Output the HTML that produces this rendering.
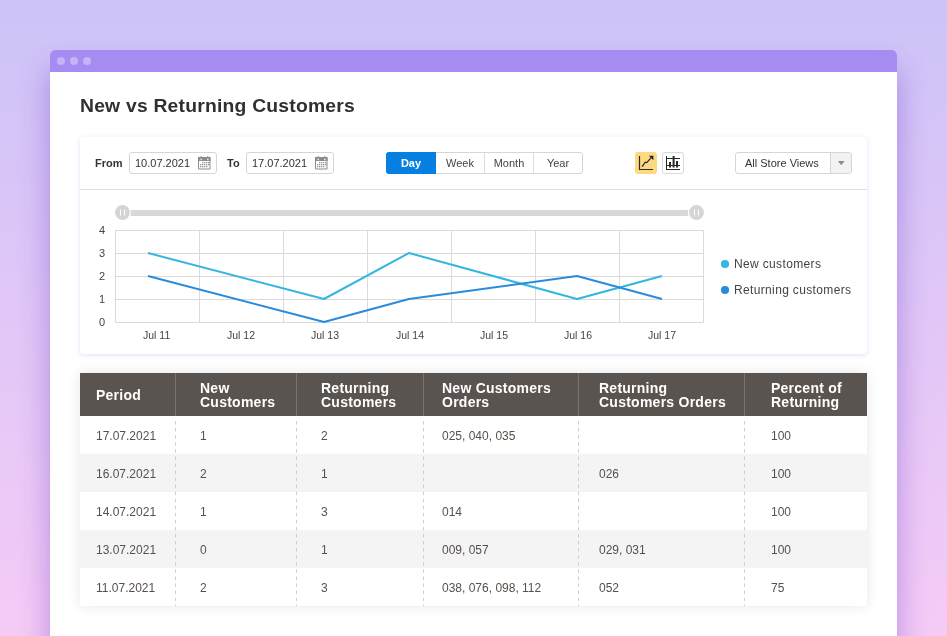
<!DOCTYPE html>
<html><head><meta charset="utf-8">
<style>
*{margin:0;padding:0;box-sizing:border-box}
html,body{width:947px;height:636px;overflow:hidden}
body{position:relative;-webkit-font-smoothing:antialiased;font-family:"Liberation Sans",sans-serif;background:linear-gradient(180deg,#cdc3f8 0%,#f5cbf6 100%);color:#333}
#win{position:absolute;left:50px;top:50px;width:847px;height:620px;background:#fff;border-radius:5px 5px 0 0;box-shadow:0 20px 30px rgba(100,50,200,0.42)}
#bar{position:absolute;left:0;top:0;width:847px;height:22px;background:#a68bf0;border-radius:5px 5px 0 0}
.dot{position:absolute;top:7px;width:8px;height:8px;border-radius:50%;background:#c4b3f7}
#title{position:absolute;left:80px;top:96px;font-size:18px;line-height:20px;font-weight:bold;color:#303030;white-space:nowrap;letter-spacing:0.2px;transform:scaleX(1.073);transform-origin:0 0}
#card{position:absolute;left:80px;top:137px;width:787px;height:217px;background:#fff;border-radius:4px;box-shadow:0 1px 5px rgba(185,185,250,0.45)}
#tb{position:absolute;left:0;top:0;width:787px;height:53px;border-bottom:1px solid #dedede}
.t{position:absolute;white-space:nowrap;line-height:14px}
.lbl{top:19px;font-size:11px;font-weight:bold;color:#333}
.inp{position:absolute;top:15px;height:22px;border:1px solid #d6d6d6;border-radius:3px;background:#fff;font-size:11px;color:#333}
.inp span{position:absolute;left:5px;top:3px;line-height:14px}
.inp svg{position:absolute;top:3px}
.bg{position:absolute;left:306px;top:15px;width:197px;height:22px;border:1px solid #d6d6d6;border-radius:3px;background:#fff}
.btn{position:absolute;top:0;height:20px;font-size:11px;color:#444;text-align:center;line-height:20px}
.sep{position:absolute;top:0;width:1px;height:20px;background:#dcdcdc}
#tbl{position:absolute;left:80px;top:373px;width:787px;height:233px;background:#fff;box-shadow:0 0 12px rgba(0,0,0,0.1)}
#hd{position:absolute;left:0;top:0;width:787px;height:43px;background:#5a5450}
.hsep{position:absolute;top:0;width:1px;height:43px;background:#7a7470}
.h{position:absolute;color:#fff;font-weight:bold;font-size:14px;line-height:14px;margin-top:0px;letter-spacing:0.25px;white-space:nowrap}
.row{position:absolute;left:0;width:787px;height:38px}
.alt{background:#f4f4f4}
.c{position:absolute;font-size:12px;color:#57504b;line-height:14px;white-space:nowrap;margin-top:1px}
.dsep{position:absolute;top:48px;width:1px;height:185px;background-image:linear-gradient(180deg,#cfcfcf 0,#cfcfcf 3.3px,transparent 3.3px,transparent 7.07px);background-size:1px 7.07px}
</style></head><body><div id="root" style="position:absolute;left:0;top:0;width:947px;height:636px;will-change:transform">
<div id="win">
  <div id="bar"><div class="dot" style="left:7px"></div><div class="dot" style="left:20px"></div><div class="dot" style="left:33px"></div></div>
</div>
<div id="title">New vs Returning Customers</div>
<div id="card">
  <div id="tb">
    <div class="t lbl" style="left:15px">From</div>
    <div class="inp" style="left:49px;width:88px"><span>10.07.2021</span>
      <svg style="left:68px" width="14" height="15" viewBox="0 0 14 15"><path d="M0.5 1.5h11.5v11.5h-11.5z" fill="none" stroke="#8f8a87" stroke-width="1"/><rect x="0" y="1" width="12.5" height="4" fill="#8f8a87"/><g fill="#fff"><rect x="2.6" y="2.4" width="1.2" height="1.8"/><rect x="9.2" y="2.4" width="1.2" height="1.8"/></g><g fill="#8f8a87"><rect x="2.7" y="0" width="1" height="2.6"/><rect x="9.3" y="0" width="1" height="2.6"/></g><g fill="#9a9592"><rect x="4" y="6" width="1.3" height="1.3"/><rect x="6" y="6" width="1.3" height="1.3"/><rect x="8" y="6" width="1.3" height="1.3"/><rect x="10" y="6" width="1.3" height="1.3"/><rect x="2" y="8" width="1.3" height="1.3"/><rect x="4" y="8" width="1.3" height="1.3"/><rect x="6" y="8" width="1.3" height="1.3"/><rect x="8" y="8" width="1.3" height="1.3"/><rect x="10" y="8" width="1.3" height="1.3"/><rect x="2" y="10" width="1.3" height="1.3"/><rect x="4" y="10" width="1.3" height="1.3"/><rect x="6" y="10" width="1.3" height="1.3"/><rect x="8" y="10" width="1.3" height="1.3"/></g></svg>
    </div>
    <div class="t lbl" style="left:147px">To</div>
    <div class="inp" style="left:166px;width:88px"><span>17.07.2021</span>
      <svg style="left:68px" width="14" height="15" viewBox="0 0 14 15"><path d="M0.5 1.5h11.5v11.5h-11.5z" fill="none" stroke="#8f8a87" stroke-width="1"/><rect x="0" y="1" width="12.5" height="4" fill="#8f8a87"/><g fill="#fff"><rect x="2.6" y="2.4" width="1.2" height="1.8"/><rect x="9.2" y="2.4" width="1.2" height="1.8"/></g><g fill="#8f8a87"><rect x="2.7" y="0" width="1" height="2.6"/><rect x="9.3" y="0" width="1" height="2.6"/></g><g fill="#9a9592"><rect x="4" y="6" width="1.3" height="1.3"/><rect x="6" y="6" width="1.3" height="1.3"/><rect x="8" y="6" width="1.3" height="1.3"/><rect x="10" y="6" width="1.3" height="1.3"/><rect x="2" y="8" width="1.3" height="1.3"/><rect x="4" y="8" width="1.3" height="1.3"/><rect x="6" y="8" width="1.3" height="1.3"/><rect x="8" y="8" width="1.3" height="1.3"/><rect x="10" y="8" width="1.3" height="1.3"/><rect x="2" y="10" width="1.3" height="1.3"/><rect x="4" y="10" width="1.3" height="1.3"/><rect x="6" y="10" width="1.3" height="1.3"/><rect x="8" y="10" width="1.3" height="1.3"/></g></svg>
    </div>
    <div class="bg">
      <div class="btn" style="left:-1px;top:-1px;width:50px;height:22px;line-height:22px;background:#0580e2;color:#fff;font-weight:bold;border-radius:3px 0 0 3px">Day</div>
      <div class="btn" style="left:49px;width:48px">Week</div>
      <div class="sep" style="left:97px"></div>
      <div class="btn" style="left:98px;width:48px">Month</div>
      <div class="sep" style="left:146px"></div>
      <div class="btn" style="left:147px;width:48px">Year</div>
    </div>
    <!-- line chart icon -->
    <div style="position:absolute;left:555px;top:15px;width:22px;height:22px;border-radius:3px;background:#fdd982">
      <svg width="22" height="22" viewBox="0 0 22 22" style="position:absolute;left:0;top:0"><path d="M4.5 4v13.5H18" fill="none" stroke="#2a2a2a" stroke-width="1.2"/><path d="M7.1 14.6L10.3 10.2L11.8 10.6L16.2 5.6" fill="none" stroke="#222630" stroke-width="1.2"/><path d="M13.9 3.7H18.4V8.2z" fill="#222630"/></svg>
    </div>
    <!-- bar chart icon -->
    <div style="position:absolute;left:582px;top:15px;width:22px;height:22px;border-radius:3px;background:#fff;border:1px solid #d9d9d9">
      <svg width="22" height="22" viewBox="0 0 22 22" style="position:absolute;left:-1px;top:-1px"><path d="M4.5 4v14M4.5 6.5H18M4.5 13.5H18M4.5 17.5H18" fill="none" stroke="#2a2a2a" stroke-width="1"/><path d="M8 10v5.5M11.6 4v11.5M15 9v6.5" fill="none" stroke="#2a2a2a" stroke-width="2"/></svg>
    </div>
    <!-- store select -->
    <div style="position:absolute;left:655px;top:15px;width:117px;height:22px;border:1px solid #d6d6d6;border-radius:3px;background:#fff;overflow:hidden">
      <div class="t" style="left:9px;top:3px;font-size:11px;color:#333">All Store Views</div>
      <div style="position:absolute;left:94px;top:0;width:22px;height:20px;background:#f2f2f2;border-left:1px solid #d6d6d6"></div>
      <svg style="position:absolute;left:102px;top:8px" width="7" height="5" viewBox="0 0 7 5"><path d="M0 0h6.5L3.25 4.2z" fill="#8a8a8a"/></svg>
    </div>
  </div>
</div>

<!-- chart -->
<svg style="position:absolute;left:0;top:0" width="947" height="636" viewBox="0 0 947 636">
  <g stroke="#dadada" stroke-width="1" fill="none">
    <path d="M115.5 230.5H703.5M115.5 253.5H703.5M115.5 276.5H703.5M115.5 299.5H703.5M115.5 322.5H703.5"/>
    <path d="M115.5 230.5V322.5M199.5 230.5V322.5M283.5 230.5V322.5M367.5 230.5V322.5M451.5 230.5V322.5M535.5 230.5V322.5M619.5 230.5V322.5M703.5 230.5V322.5"/>
  </g>
  <rect x="128" y="210" width="562" height="6" fill="#d8d8d8"/>
  <circle cx="122.5" cy="212.5" r="8" fill="#d5d5d5" stroke="#fff" stroke-width="1.2"/>
  <circle cx="696.5" cy="212.5" r="8" fill="#d5d5d5" stroke="#fff" stroke-width="1.2"/>
  <g stroke="#fff" stroke-width="1"><path d="M120.5 209.5v6M124.5 209.5v6M694.5 209.5v6M698.5 209.5v6"/></g>
  <polyline points="148,253 324,299 409,253 577,299 662,276" fill="none" stroke="#36b5e0" stroke-width="2" stroke-linejoin="round"/>
  <polyline points="148,276 324,322 409,299 577,276 662,299" fill="none" stroke="#2a8bdc" stroke-width="2" stroke-linejoin="round"/>
  <circle cx="725" cy="264" r="4.1" fill="#36b5e0"/>
  <circle cx="725" cy="290" r="4.1" fill="#2a8bdc"/>
</svg>
<div class="t" style="left:99px;top:223px;font-size:11px;color:#444">4</div>
<div class="t" style="left:99px;top:246px;font-size:11px;color:#444">3</div>
<div class="t" style="left:99px;top:269px;font-size:11px;color:#444">2</div>
<div class="t" style="left:99px;top:292px;font-size:11px;color:#444">1</div>
<div class="t" style="left:99px;top:315px;font-size:11px;color:#444">0</div>
<div style="position:absolute;left:0;top:328px;width:947px;height:14px;font-size:10.5px;color:#444;line-height:14px">
  <span class="t" style="left:143px">Jul 11</span>
  <span class="t" style="left:227px">Jul 12</span>
  <span class="t" style="left:311px">Jul 13</span>
  <span class="t" style="left:396px">Jul 14</span>
  <span class="t" style="left:480px">Jul 15</span>
  <span class="t" style="left:564px">Jul 16</span>
  <span class="t" style="left:648px">Jul 17</span>
</div>
<div class="t" style="left:734px;top:257px;font-size:12px;color:#444;letter-spacing:0.35px">New customers</div>
<div class="t" style="left:734px;top:283px;font-size:12px;color:#444;letter-spacing:0.35px">Returning customers</div>

<!-- table -->
<div id="tbl">
  <div class="row" style="top:43px"></div>
  <div class="row alt" style="top:81px"></div>
  <div class="row" style="top:119px"></div>
  <div class="row alt" style="top:157px"></div>
  <div class="row" style="top:195px"></div>
  <div id="hd">
    <div class="hsep" style="left:95px"></div>
    <div class="hsep" style="left:216px"></div>
    <div class="hsep" style="left:343px"></div>
    <div class="hsep" style="left:498px"></div>
    <div class="hsep" style="left:664px"></div>
    <div class="h" style="left:16px;top:15px">Period</div>
    <div class="h" style="left:120px;top:8px">New<br>Customers</div>
    <div class="h" style="left:241px;top:8px">Returning<br>Customers</div>
    <div class="h" style="left:362px;top:8px">New Customers<br>Orders</div>
    <div class="h" style="left:519px;top:8px">Returning<br>Customers Orders</div>
    <div class="h" style="left:691px;top:8px">Percent of<br>Returning</div>
  </div>
  <div class="dsep" style="left:95px"></div>
  <div class="dsep" style="left:216px"></div>
  <div class="dsep" style="left:343px"></div>
  <div class="dsep" style="left:498px"></div>
  <div class="dsep" style="left:664px"></div>
  <!-- rows -->
  <div class="c" style="left:16px;top:55px">17.07.2021</div>
  <div class="c" style="left:120px;top:55px">1</div>
  <div class="c" style="left:241px;top:55px">2</div>
  <div class="c" style="left:362px;top:55px">025, 040, 035</div>
  <div class="c" style="left:691px;top:55px">100</div>

  <div class="c" style="left:16px;top:93px">16.07.2021</div>
  <div class="c" style="left:120px;top:93px">2</div>
  <div class="c" style="left:241px;top:93px">1</div>
  <div class="c" style="left:519px;top:93px">026</div>
  <div class="c" style="left:691px;top:93px">100</div>

  <div class="c" style="left:16px;top:131px">14.07.2021</div>
  <div class="c" style="left:120px;top:131px">1</div>
  <div class="c" style="left:241px;top:131px">3</div>
  <div class="c" style="left:362px;top:131px">014</div>
  <div class="c" style="left:691px;top:131px">100</div>

  <div class="c" style="left:16px;top:169px">13.07.2021</div>
  <div class="c" style="left:120px;top:169px">0</div>
  <div class="c" style="left:241px;top:169px">1</div>
  <div class="c" style="left:362px;top:169px">009, 057</div>
  <div class="c" style="left:519px;top:169px">029, 031</div>
  <div class="c" style="left:691px;top:169px">100</div>

  <div class="c" style="left:16px;top:207px">11.07.2021</div>
  <div class="c" style="left:120px;top:207px">2</div>
  <div class="c" style="left:241px;top:207px">3</div>
  <div class="c" style="left:362px;top:207px">038, 076, 098, 112</div>
  <div class="c" style="left:519px;top:207px">052</div>
  <div class="c" style="left:691px;top:207px">75</div>
</div>
</div></body></html>
